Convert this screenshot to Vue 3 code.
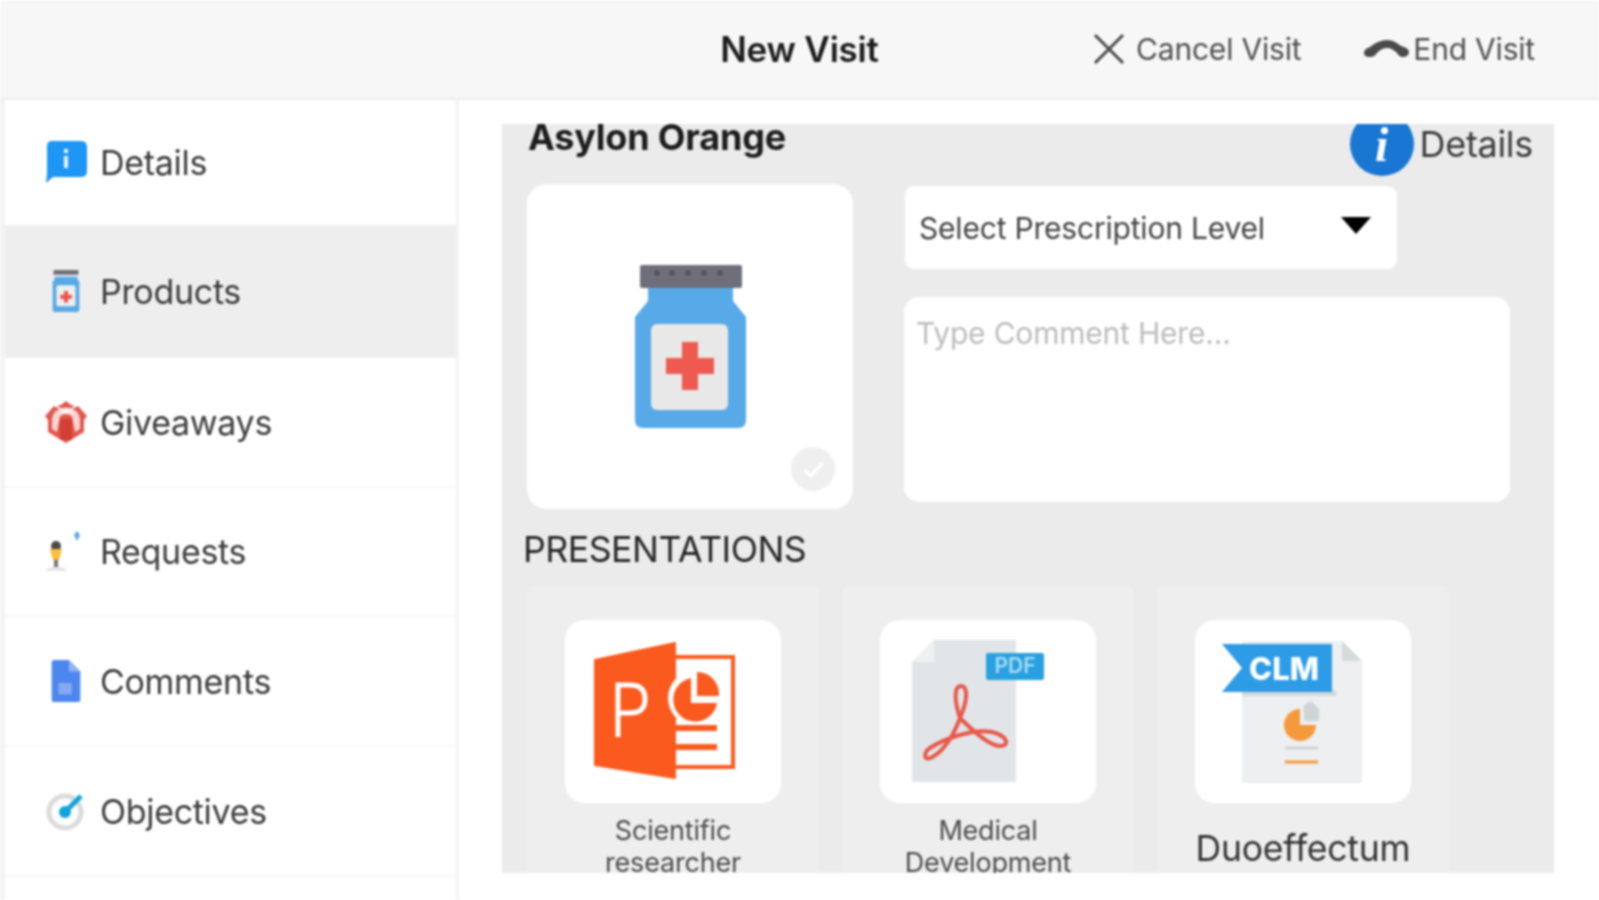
<template>
  <div class="app">
    <header class="topbar">
      <div></div>
      <h1 class="pageTitle">New Visit</h1>
      <div class="actions">
        <button class="action">
          <svg class="cancelIcon" viewBox="0 0 32 32"><path d="M2 2 30 30M30 2 2 30" fill="none" stroke="#4a4a4a" stroke-width="3"/></svg>
          <span>Cancel Visit</span>
        </button>
        <button class="action endAction">
          <svg class="endIcon" viewBox="0 0 47 20"><path d="M1 14c0-3 3-5 6-6 5-4 11-7 17-7 6 0 10 3 14 6 4 1 8 3 8 6 0 3-3 5-6 5-3 0-5-2-6-4-3-3-6-5-10-5-5 0-8 3-11 6-1 2-3 3-6 3-3 0-6-1-6-4Z" fill="#4a4a4a"/></svg>
          <span>End Visit</span>
        </button>
      </div>
    </header>

    <div class="body">
      <nav class="sidebar">
        <div v-for="item in menu" :key="item.name" class="navRow" :class="{ active: item.name === 'Products' }" :style="{ height: item.h + 'px' }">
          <span class="navIcon">
            <svg v-if="item.name === 'Details'" viewBox="0 0 42 42"><path d="M7 0h29q6 0 6 6v24q0 6-6 6H8L1 42l1-9V5q0-5 5-5Z" fill="#1e96f5"/><rect x="19" y="8" width="4" height="4" fill="#e8f4ff"/><rect x="19" y="15" width="4" height="12" fill="#e8f4ff"/></svg>
            <svg v-else-if="item.name === 'Products'" viewBox="0 0 42 44"><rect x="8" y="0" width="26" height="5" fill="#6f6f7b"/><path d="M9 7h24v3l2 2v29q0 3-3 3H10q-3 0-3-3V12l2-2Z" fill="#58a9e8"/><rect x="11" y="16" width="20" height="22" rx="2" fill="#eee"/><path d="M19 22h4v4h4v4h-4v4h-4v-4h-4v-4h4Z" fill="#ee4f45"/></svg>
            <svg v-else-if="item.name === 'Giveaways'" viewBox="0 0 42 42"><path d="M21 0l5 4 4 1-9 5-9-5 4-1Z" fill="#e2574c"/><path d="M9 5 0 15l3 4v12l18 11 18-11V19l3-4-9-10-12 7Z" fill="#e2574c"/><path d="M7 18Q8 12 12 9l3 6-3 16-5-3Zm28 0Q34 12 30 9l-3 6 3 16 5-3Z" fill="#fff" fill-opacity=".75"/><path d="M12 10Q21 3 30 10l-3 5q-6-4-12 0Z" fill="#fff" fill-opacity=".85"/><rect x="15" y="18" width="12" height="21" fill="#d23f34"/></svg>
            <svg v-else-if="item.name === 'Requests'" viewBox="0 0 42 42"><circle cx="11" cy="15" r="5" fill="#4a4a4a"/><path d="M5 18h12l-3 11h-6Z" fill="#f8bd3a"/><rect x="9" y="29" width="4" height="9" fill="#757575"/><path d="M0 40q5-5 9-4h4q5-1 9 4Z" fill="#e6e6e6"/><path d="M32 0l3 4-3 6-3-6Z" fill="#5aa9f0"/></svg>
            <svg v-else-if="item.name === 'Comments'" viewBox="0 0 42 44"><path d="M9 0h15l12 12v29q0 3-3 3H9q-3 0-3-3V3q0-3 3-3Z" fill="#4d86ee"/><path d="M24 0l12 12H26q-2 0-2-2Z" fill="#8fb4f5"/><rect x="13" y="24" width="14" height="12" fill="#86aaf2"/></svg>
            <svg v-else viewBox="0 0 42 42"><circle cx="20" cy="22" r="16" fill="#fff" stroke="#dcdcdc" stroke-width="5"/><circle cx="20" cy="22" r="6" fill="#11a4dc"/><path d="M20 22 36 6" stroke="#11a4dc" stroke-width="5"/></svg>
          </span>
          <span>{{ item.name }}</span>
        </div>
      </nav>

      <main class="panel">
        <div class="productHead">
          <h2 class="productName">Asylon Orange</h2>
          <div class="detailsLink">
            <span class="infoCircle">i</span>
            <span>Details</span>
          </div>
        </div>

        <div class="productRow">
          <div class="productCard">
            <svg class="bottle" viewBox="0 0 111 163">
              <path d="M13 20H98V36L111 52V155q0 8-8 8H8q-8 0-8-8V52L13 36Z" fill="#58a9e8"/>
              <rect x="5" y="0" width="102" height="23" rx="2" fill="#6f6f7b"/>
              <g fill="#55555f"><circle cx="22" cy="8" r="3"/><circle cx="37" cy="8" r="3"/><circle cx="53" cy="8" r="3"/><circle cx="69" cy="8" r="3"/><circle cx="85" cy="8" r="3"/></g>
              <rect x="16" y="59" width="77" height="86" rx="6" fill="#e8e8e8"/>
              <path d="M47 77H63V93H79V109H63V125H47V109H31V93H47Z" fill="#ee5a4f"/>
            </svg>
            <span class="checkMark">
              <svg viewBox="0 0 24 24"><path d="M5 13l5 5L20 7" fill="none" stroke="#fff" stroke-width="3"/></svg>
            </span>
          </div>
          <div class="fields">
            <div class="selectBox">
              <span>Select Prescription Level</span>
              <span class="caret"></span>
            </div>
            <div class="commentBox">Type Comment Here...</div>
          </div>
        </div>

        <h3 class="sectionTitle">PRESENTATIONS</h3>

        <div class="presentations">
          <div class="presItem">
            <div class="tile">
              <svg viewBox="0 0 216 183">
                <rect x="100" y="37" width="68" height="110" fill="#fff" stroke="#fb5a1e" stroke-width="4"/>
                <path d="M30 40 110 23V158L30 145Z" fill="#fb5a1e" stroke="#fb5a1e" stroke-width="2" stroke-linejoin="round"/>
                <path d="M53 117V65h12q15 0 15 14t-15 14H53" fill="none" stroke="#fff" stroke-width="5"/>
                <circle cx="131" cy="78" r="28" fill="#fff"/>
                <path d="M126 58a22 22 0 1 0 26 25h-26Z" fill="#fb5a1e"/>
                <path d="M132 52a22 22 0 0 1 22 24h-22Z" fill="#fb5a1e"/>
                <path d="M110 108h42M110 127h42" stroke="#fb5a1e" stroke-width="6"/>
              </svg>
            </div>
            <div class="presLabel">Scientific researcher</div>
          </div>
          <div class="presItem">
            <div class="tile">
              <svg viewBox="0 0 216 183">
                <path d="M54 20H136V162H32V42Z" fill="#e1e5e8"/>
                <path d="M54 20V42H32Z" fill="#eef1f2"/>
                <rect x="106" y="33" width="58" height="27" rx="2" fill="#29a0e0"/>
                <text x="135" y="53" text-anchor="middle" class="pdfText">PDF</text>
                <path d="M80 98C74 80 74 66 81 66C88 66 88 80 80 98C74 115 64 130 54 136C44 143 42 133 50 128C62 120 92 108 112 112C128 116 130 126 120 126C110 126 94 112 80 98Z" fill="none" stroke="#e8594a" stroke-width="4"/>
              </svg>
            </div>
            <div class="presLabel">Medical Development</div>
          </div>
          <div class="presItem">
            <div class="tile">
              <svg viewBox="0 0 216 183">
                <path d="M47 21H147L167 41V163H47Z" fill="#edeff0"/>
                <path d="M147 21 167 41H147Z" fill="#d5dadd"/>
                <rect x="47" y="70" width="94" height="6" fill="#d5d8da"/>
                <path d="M27 24H137V72H27L47 48Z" fill="#2d9be5"/>
                <text x="89" y="60" text-anchor="middle" class="clmText">CLM</text>
                <path d="M105 89A16 16 0 1 0 121 105H105Z" fill="#f59a3c"/>
                <path d="M109 85l7-4 8 8v12h-15Z" fill="#ced3d6"/>
                <path d="M90 128h33" stroke="#d0d3d6" stroke-width="3"/>
                <path d="M90 142h33" stroke="#f59a3c" stroke-width="3"/>
              </svg>
            </div>
            <div class="presLabel big">Duoeffectum</div>
          </div>
        </div>
      </main>
    </div>
  </div>
</template>

<script setup>
const menu = [
  { name: "Details", h: 126 },
  { name: "Products", h: 132 },
  { name: "Giveaways", h: 130 },
  { name: "Requests", h: 129 },
  { name: "Comments", h: 130 },
  { name: "Objectives", h: 130 },
];
</script>

<style>
html, body { margin: 0; background: #fff; overflow: hidden; }
</style>

<style scoped>
.app {
  width: 1599px;
  height: 900px;
  overflow: hidden;
  display: flex;
  flex-direction: column;
  font-family: Inter, "Liberation Sans", sans-serif;
  color: #3c3c3c;
  background: #fff;
  filter: blur(1px);
}
.topbar {
  height: 100px;
  flex: none;
  box-sizing: border-box;
  background: #f7f7f7;
  border-bottom: 2px solid #ececec;
  display: grid;
  grid-template-columns: 1fr auto 1fr;
  align-items: center;
  padding: 0 64px;
}
.pageTitle {
  margin: 0;
  font-size: 35px;
  font-weight: 600;
  color: #1c1c1c;
  letter-spacing: -0.2px;
}
.actions {
  display: flex;
  justify-content: flex-end;
  align-items: center;
  gap: 62px;
}
.action {
  display: flex;
  align-items: center;
  gap: 11px;
  border: none;
  background: none;
  padding: 0;
  font: inherit;
  font-size: 30px;
  color: #505050;
  letter-spacing: -0.2px;
}
.endAction { gap: 3px; }
.cancelIcon { width: 32px; height: 32px; }
.endIcon { width: 47px; height: 20px; }

.body {
  flex: 1;
  min-height: 0;
  display: flex;
}
.sidebar {
  width: 451px;
  margin-left: 5px;
  flex: none;
  box-shadow: -5px 0 0 #f3f3f3, 3px 0 0 #f3f3f3;
}
.navRow {
  box-sizing: border-box;
  display: flex;
  align-items: center;
  gap: 13px;
  padding-left: 39px;
  font-size: 34px;
  letter-spacing: -0.3px;
  border-bottom: 2px solid #f8f8f8;
}
.navRow.active { background: #eeeeee; border-bottom-color: #eeeeee; }
.navIcon { width: 43px; height: 44px; flex: none; display: flex; align-items: center; justify-content: center; }
.navIcon svg { width: 42px; height: 42px; display: block; }

.panel {
  width: 1052px;
  height: 749px;
  margin: 24px 0 0 46px;
  flex: none;
  box-sizing: border-box;
  background: #ebebeb;
  overflow: hidden;
  padding: 0 0 0 24px;
}
.productHead {
  height: 60px;
  display: flex;
  justify-content: space-between;
  align-items: flex-start;
  padding-right: 21px;
}
.productName {
  margin: -9px 0 0 2px;
  font-size: 36px;
  font-weight: 700;
  color: #1d1d1d;
  letter-spacing: -0.2px;
}
.detailsLink {
  display: flex;
  align-items: center;
  gap: 6px;
  margin-top: -12px;
  font-size: 36px;
  letter-spacing: -0.3px;
}
.infoCircle {
  width: 64px;
  height: 64px;
  border-radius: 50%;
  background: #1976d2;
  color: #fff;
  display: flex;
  align-items: center;
  justify-content: center;
  font-family: "Liberation Serif", serif;
  font-style: italic;
  font-weight: 700;
  font-size: 48px;
}
.productRow {
  display: flex;
  align-items: flex-start;
  gap: 51px;
  margin-left: 1px;
}
.productCard {
  position: relative;
  width: 326px;
  height: 325px;
  border-radius: 20px;
  background: #fff;
  display: flex;
  align-items: center;
  justify-content: center;
}
.bottle { width: 111px; height: 163px; }
.checkMark {
  position: absolute;
  right: 18px;
  bottom: 18px;
  width: 44px;
  height: 44px;
  border-radius: 50%;
  background: #efefef;
  display: flex;
  align-items: center;
  justify-content: center;
}
.checkMark svg { width: 28px; height: 28px; }
.fields {
  display: flex;
  flex-direction: column;
  gap: 28px;
  margin-top: 2px;
}
.selectBox {
  box-sizing: border-box;
  width: 492px;
  height: 83px;
  margin-left: 1px;
  border-radius: 9px;
  background: #fff;
  display: flex;
  align-items: center;
  justify-content: space-between;
  padding: 0 26px 0 14px;
  font-size: 30px;
  color: #444;
  letter-spacing: -0.2px;
}
.caret {
  width: 0;
  height: 0;
  border-left: 15px solid transparent;
  border-right: 15px solid transparent;
  border-top: 17px solid #000;
  margin-top: -4px;
}
.commentBox {
  box-sizing: border-box;
  width: 606px;
  height: 205px;
  border-radius: 15px;
  background: #fff;
  padding: 18px 12px;
  font-size: 30px;
  color: #bcbcbc;
  letter-spacing: -0.2px;
}
.sectionTitle {
  margin: 18px 0 15px -3px;
  font-size: 35.7px;
  line-height: 44px;
  font-weight: 400;
  color: #262626;
  letter-spacing: -0.5px;
}
.presentations {
  display: flex;
  gap: 23px;
  margin-left: 1px;
}
.presItem {
  width: 292px;
  height: 320px;
  background: #eeeeee;
  border-radius: 6px 6px 0 0;
  padding-top: 34px;
  box-sizing: border-box;
  display: flex;
  flex-direction: column;
  align-items: center;
}
.tile {
  width: 216px;
  height: 183px;
  border-radius: 20px;
  background: #fff;
  flex: none;
}
.tile svg { width: 216px; height: 183px; display: block; }
.pdfText {
  font-size: 21px;
  font-weight: 600;
  fill: #a9dcf5;
}
.clmText {
  font-size: 31px;
  font-weight: 800;
  fill: #fff;
}
.presLabel {
  width: 216px;
  margin-top: 12px;
  text-align: center;
  font-size: 27px;
  line-height: 32px;
  color: #4c4c4c;
  letter-spacing: -0.2px;
}
.presLabel.big {
  margin-top: 24px;
  font-size: 35.5px;
  line-height: 44px;
  color: #333;
  white-space: nowrap;
}
</style>
